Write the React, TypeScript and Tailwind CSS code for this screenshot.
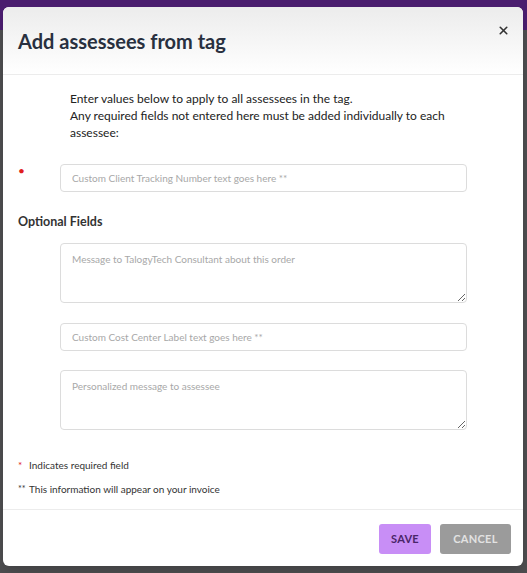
import { X } from "lucide-react";

const font = { fontFamily: "Lato, 'Open Sans', sans-serif" };

export default function App() {
  return (
    <div
      className="relative h-[573px] w-[527px] overflow-hidden bg-[#4d4d4f] pl-[3px] pr-[4px] pt-[7px]"
      style={font}
    >
      {/* purple app bar behind the overlay */}
      <div className="absolute inset-x-0 top-0 h-[30px] bg-[#4a1d6e]" />

      <div className="relative flex h-[559px] flex-col rounded-[6px] bg-white shadow-lg">
        {/* Header */}
        <div className="flex h-[68px] items-start justify-between rounded-t-[6px] border-b border-[#ececec] bg-gradient-to-b from-[#ececec] to-white px-[15px] pt-[21px]">
          <h1 className="text-[20px] font-bold leading-[26px] text-[#28303f]">Add assessees from tag</h1>
          <button className="mr-[-2px] mt-[-4px] text-[#333]">
            <X size={13} strokeWidth={3} />
          </button>
        </div>

        {/* Body */}
        <div className="flex flex-1 flex-col px-[15px] pt-[15px]">
          <p className="ml-[52px] w-[380px] text-[12px] leading-[17px] text-[#222]">
            Enter values below to apply to all assessees in the tag.
            <br />
            Any required fields not entered here must be added individually to each assessee:
          </p>

          <div className="mt-[23px] flex items-start">
            <span className="mt-[2px] w-[42px] text-[12px] leading-[10px] text-[#e0201c]">•</span>
            <input
              className="h-[28px] w-[407px] rounded-[4px] border border-[#dcdcdc] px-[11px] text-[10px] text-[#333] outline-none placeholder:text-[#a8a8a8]"
              placeholder="Custom Client Tracking Number text goes here **"
            />
          </div>

          <h2 className="mt-[22px] text-[12.5px] font-bold leading-[16px] text-[#333]">Optional Fields</h2>

          <div className="ml-[42px] mt-[13px] flex w-[407px] flex-col">
            <textarea
              className="h-[60px] resize-y rounded-[4px] border border-[#dcdcdc] px-[11px] py-[8px] text-[10px] text-[#333] outline-none placeholder:text-[#a8a8a8]"
              placeholder="Message to TalogyTech Consultant about this order"
            />
            <input
              className="mt-[20px] h-[28px] rounded-[4px] border border-[#dcdcdc] px-[11px] text-[10px] text-[#333] outline-none placeholder:text-[#a8a8a8]"
              placeholder="Custom Cost Center Label text goes here **"
            />
            <textarea
              className="mt-[19px] h-[60px] resize-y rounded-[4px] border border-[#dcdcdc] px-[11px] py-[8px] text-[10px] text-[#333] outline-none placeholder:text-[#a8a8a8]"
              placeholder="Personalized message to assessee"
            />
          </div>

          <div className="mt-[29px] flex flex-col gap-[12px] text-[10px] leading-[12px] text-[#333]">
            <div className="flex items-center">
              <span className="w-[11px] text-[#e0201c]">*</span>
              <span>Indicates required field</span>
            </div>
            <div className="flex items-center">
              <span className="w-[11px] text-[9px]">**</span>
              <span>This information will appear on your invoice</span>
            </div>
          </div>
        </div>

        {/* Footer */}
        <div className="flex h-[57px] items-start justify-end gap-[9px] border-t border-[#ececec] pr-[12px] pt-[14px]">
          <button className="h-[30px] w-[52px] rounded-[3px] bg-[#c88ef6] text-[11px] font-bold tracking-wide text-[#4a2569]">
            SAVE
          </button>
          <button className="h-[30px] w-[71px] rounded-[3px] bg-[#9b9b9b] text-[11px] font-bold tracking-wide text-[#e2e2e2]">
            CANCEL
          </button>
        </div>
      </div>
    </div>
  );
}
